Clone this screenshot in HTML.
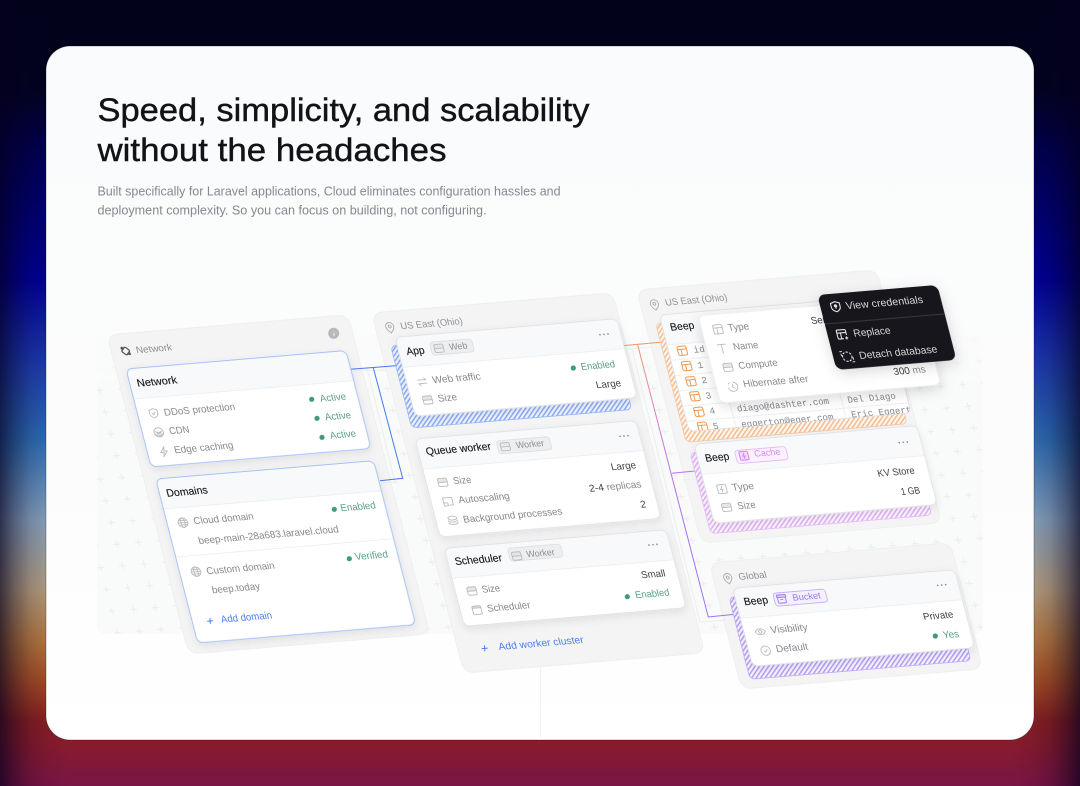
<!DOCTYPE html>
<html><head><meta charset="utf-8"><title>Speed, simplicity, and scalability</title>
<style>
html,body{margin:0;padding:0;width:1080px;height:786px;overflow:hidden}
body{background:
linear-gradient(to right,rgba(5,0,30,.7) 0,rgba(5,0,30,.42) 14px,rgba(5,0,30,.18) 30px,rgba(5,0,30,.05) 48px,rgba(5,0,30,0) 70px,rgba(5,0,30,0) 1010px,rgba(5,0,30,.05) 1032px,rgba(5,0,30,.18) 1050px,rgba(5,0,30,.42) 1066px,rgba(5,0,30,.7) 1080px),
linear-gradient(to bottom,#02021a 0,#020220 90px,#000050 150px,#00009a 280px,#1a33b0 350px,#2f70b8 440px,#8aa5c0 520px,#b8a080 590px,#b87a40 640px,#a84f25 680px,#8a2020 720px,#851a30 750px,#7a1545 786px)}
svg{position:absolute;left:0;top:0;display:block}
text{font-family:"Liberation Sans",sans-serif;font-size:10px}
.l{fill:#85888d;font-size:9.8px}.v{fill:#3e4146;font-size:9.8px}.g{fill:#5a9f85;font-size:9.8px}
.h{fill:#14161a;font-size:10.5px;stroke:#14161a;stroke-width:.12}.p{fill:#8d9095;font-size:9.5px}.b{fill:#4a80f0;font-size:10px}
.m{fill:#84878c;font-family:"Liberation Mono",monospace;font-size:9.2px}.w{fill:#d6d6d6;font-size:10.2px}
.k{fill:#8a8d92;font-size:9px}
.i{fill:none;stroke:#b9bbbf;stroke-width:.9;stroke-linecap:round;stroke-linejoin:round}
</style></head><body>
<svg width="1080" height="786" viewBox="0 0 1080 786" xmlns="http://www.w3.org/2000/svg">
<defs>
<linearGradient id="pg" x1="0" y1="0" x2="0" y2="1"><stop offset="0" stop-color="#fafbfc"/><stop offset=".6" stop-color="#fcfcfd"/><stop offset="1" stop-color="#ffffff"/></linearGradient>
<linearGradient id="fd" x1="0" y1="0" x2="0" y2="1"><stop offset="0" stop-color="#000"/><stop offset=".14" stop-color="#000"/><stop offset=".3" stop-color="#fff"/></linearGradient>
<mask id="gm" maskUnits="userSpaceOnUse" x="97" y="280" width="886" height="355"><rect x="97" y="280" width="886" height="355" fill="url(#fd)"/></mask>
<pattern id="plus" width="21.7" height="21.7" patternUnits="userSpaceOnUse" patternTransform="matrix(1 -.084 .256 1 7.6 -11.8)"><path d="M11 7.4v7M7.5 10.85h7" stroke="#eaecee" stroke-width=".9" fill="none"/></pattern>
<pattern id="hb" width="3.4" height="3.4" patternUnits="userSpaceOnUse" patternTransform="rotate(-45)"><rect width="3.4" height="3.4" fill="#eff3fe"/><rect width="3.4" height="1.4" fill="#8aabf3"/></pattern>
<pattern id="ho" width="3.4" height="3.4" patternUnits="userSpaceOnUse" patternTransform="rotate(-45)"><rect width="3.4" height="3.4" fill="#fef6ef"/><rect width="3.4" height="1.4" fill="#f3bd8f"/></pattern>
<pattern id="hp" width="3.4" height="3.4" patternUnits="userSpaceOnUse" patternTransform="rotate(-45)"><rect width="3.4" height="3.4" fill="#fcf5fe"/><rect width="3.4" height="1.4" fill="#e0b0f4"/></pattern>
<pattern id="hv" width="3.4" height="3.4" patternUnits="userSpaceOnUse" patternTransform="rotate(-45)"><rect width="3.4" height="3.4" fill="#f6f3fe"/><rect width="3.4" height="1.4" fill="#b49ef5"/></pattern>
<linearGradient id="og" gradientUnits="userSpaceOnUse" x1="637" y1="345" x2="708" y2="617"><stop offset="0" stop-color="#f0975a"/><stop offset=".28" stop-color="#d77cc8"/><stop offset=".5" stop-color="#b26df0"/><stop offset="1" stop-color="#9a70f5"/></linearGradient>
<filter id="s" x="-15%" y="-25%" width="130%" height="160%"><feDropShadow dx="0" dy="3" stdDeviation="4" flood-color="#000" flood-opacity=".08"/></filter>
<filter id="s2" x="-25%" y="-30%" width="150%" height="170%"><feDropShadow dx="0" dy="4" stdDeviation="7" flood-color="#000" flood-opacity=".15"/></filter>
<filter id="bl" x="0" y="0" width="1080" height="786" filterUnits="userSpaceOnUse"><feGaussianBlur stdDeviation=".35"/></filter>
<clipPath id="cb"><rect transform="matrix(1 -.084 .256 1 659.3 315)" width="222" height="116.5" rx="6"/></clipPath>

<g id="sz" transform="matrix(1 -.084 .256 1 0 0)" class="i"><rect x="-4" y="-3.5" width="8" height="3.5" fill="#e6e7e9" stroke="none"/><rect x="-4.5" y="-4" width="9" height="8" rx="1.5"/><path d="M-4.5 0H4.5" /></g>
<g id="tb" transform="matrix(1 -.084 .256 1 0 0)" class="i"><rect x="-4.5" y="-4.5" width="9" height="9" rx="1.5"/><path d="M-4.5-1.5H4.5M-1-1.5V4.5"/></g>
<g id="ot" transform="matrix(1 -.084 .256 1 0 0)" fill="none" stroke="#f5984f" stroke-width="1" stroke-linejoin="round"><rect x="-4.5" y="-4.5" width="9" height="9" rx="1.6"/><path d="M-4.5-1.5H4.5M-1-1.5V4.5"/></g>
<g id="ar" transform="matrix(1 -.084 .256 1 0 0)" class="i"><path d="M-4-1.8H4L2.2-3.6M4 1.8H-4L-2.2 3.6"/></g>
<g id="sh" transform="matrix(1 -.084 .256 1 0 0)" class="i"><path d="M0-4.6L4-3.2V0C4 2.4 2 3.9 0 4.6C-2 3.9-4 2.4-4 0V-3.2Z"/><path d="M-1.5 0L-.3 1.2L1.6-.9"/></g>
<g id="cd" transform="matrix(1 -.084 .256 1 0 0)" class="i"><circle r="4.6"/><path d="M-2.8-1A2.9 2.9 0 0 0 2.8-1M-1.6-.6A1.7 1.7 0 0 0 1.6-.6"/><path d="M-4 1.5A4.4 4.4 0 0 0 4 1.5" fill="#dcdde0"/></g>
<g id="bo" transform="matrix(1 -.084 .256 1 0 0)" class="i"><path d="M1.2-5L-3.4 .6H0L-1.2 5L3.4-.6H0Z"/></g>
<g id="gl" transform="matrix(1 -.084 .256 1 0 0)" class="i"><circle r="4.7"/><ellipse rx="2" ry="4.7"/><path d="M-4.7 0H4.7M-4-2.2H4M-4 2.2H4"/></g>
<g id="pn" transform="matrix(1 -.084 .256 1 0 0)" class="i" style="stroke:#a8aaae"><path d="M0 5.2C-2.6 2.8-4 1-4-1.2A4 4 0 0 1 4-1.2C4 1 2.6 2.8 0 5.2Z"/><circle cy="-1.2" r="1.4"/></g>
<g id="au" transform="matrix(1 -.084 .256 1 0 0)" class="i"><path d="M-4.5 1V-4H4.5V3.5H1"/><rect x="-4.5" y="1" width="4" height="3" rx=".5"/></g>
<g id="st" transform="matrix(1 -.084 .256 1 0 0)" class="i"><ellipse cy="-2.6" rx="4.4" ry="1.9"/><path d="M-4.4-.4C-4.4 2 4.4 2 4.4-.4M-4.4 1.9C-4.4 4.3 4.4 4.3 4.4 1.9"/></g>
<g id="ca" transform="matrix(1 -.084 .256 1 0 0)" class="i"><rect x="-4" y="-3.8" width="8" height="1.8" fill="#dcdde0" stroke="none"/><rect x="-4.3" y="-4" width="8.6" height="8.4" rx="1.2"/><path d="M-4.3-2H4.3"/></g>
<g id="ey" transform="matrix(1 -.084 .256 1 0 0)" class="i"><path d="M-5 0C-2.5-4 2.5-4 5 0C2.5 4-2.5 4-5 0Z"/><circle r="1.6"/></g>
<g id="ck" transform="matrix(1 -.084 .256 1 0 0)" class="i"><circle r="4.6"/><path d="M-1.6.2L-.4 1.4L1.8-1.2"/></g>
<g id="tt" transform="matrix(1 -.084 .256 1 0 0)" class="i"><path d="M-4-4.2H4M0-4.2V4.4"/></g>
<g id="cl" transform="matrix(1 -.084 .256 1 0 0)" class="i"><path d="M1-4.6A4.7 4.7 0 1 1-4.6 1"/><path d="M0-2V.6L1.8 1.6"/><path d="M-4-3L-2.6-4.2"/></g>
<g id="ty" transform="matrix(1 -.084 .256 1 0 0)" class="i"><rect x="-4.4" y="-4.4" width="8.8" height="8.8" rx="1.2"/><path d="M.6-3L-1.4.4H1L-.6 3"/></g>
<g id="dt" transform="matrix(1 -.084 .256 1 0 0)" fill="#8d9095"><circle cx="-4" r=".85"/><circle r=".85"/><circle cx="4" r=".85"/></g>
</defs>

<!-- page card -->
<rect x="46" y="46" width="988" height="694" rx="24" fill="url(#pg)" stroke="#000" stroke-opacity=".28" stroke-width="1"/>
<text x="97.5" y="121" fill="#111316" stroke="#111316" stroke-width=".4" textLength="492" lengthAdjust="spacingAndGlyphs" style="font-size:32px">Speed, simplicity, and scalability</text>
<text x="97.5" y="161" fill="#111316" stroke="#111316" stroke-width=".4" textLength="349" lengthAdjust="spacingAndGlyphs" style="font-size:32px">without the headaches</text>
<text x="97.5" y="195.3" fill="#85888e" textLength="463" lengthAdjust="spacingAndGlyphs" style="font-size:13px">Built specifically for Laravel applications, Cloud eliminates configuration hassles and</text>
<text x="97.5" y="214.3" fill="#85888e" textLength="389" lengthAdjust="spacingAndGlyphs" style="font-size:13px">deployment complexity. So you can focus on building, not configuring.</text>

<g filter="url(#bl)">
<!-- grid -->
<g mask="url(#gm)"><rect x="97" y="280" width="886" height="354" rx="8" fill="#f9fafa"/><rect x="97" y="280" width="886" height="354" rx="8" fill="url(#plus)"/></g>
<path d="M540.5 660V738" stroke="#f1f1f2" fill="none"/>

<!-- panels -->
<g fill="#f4f4f5" stroke="#efeff0">
<rect transform="matrix(1 -.084 .256 1 107 335)" width="241" height="319" rx="10"/>
<rect transform="matrix(1 -.084 .256 1 371.7 313)" width="241" height="360" rx="10"/>
<rect transform="matrix(1 -.084 .256 1 636.7 290)" width="240" height="253" rx="10"/>
<rect transform="matrix(1 -.084 .256 1 709.3 563)" width="241" height="126" rx="10"/>
</g>

<!-- rails -->
<g fill="none" stroke="#ecedee">
<path d="M353 371L387 370M367 368L395 482M382 483L398 482"/>
<path d="M626 349L652 347M632 349L700 622L726 620M683 480L695 479"/>
</g>

<!-- connectors -->
<g fill="none" stroke-width="1">
<path d="M350.7 369.3L395.7 365.7M373.3 367.7L402.7 478.3L380 480.7" stroke="#4a78f0"/>
<path d="M622.3 345.7L660 342.3" stroke="#f0975a"/>
<path d="M637.7 345L708.3 617L733 614.5" stroke="url(#og)"/>
<path d="M672 473.3L695 471" stroke="#b873ec"/>
</g>

<!-- hatches -->
<rect transform="matrix(1 -.084 .256 1 390.7 346)" width="220" height="82" rx="5" fill="url(#hb)" stroke="#9ab8f6" stroke-width=".8"/>
<rect transform="matrix(1 -.084 .256 1 655.7 323.3)" width="221" height="119" rx="5" fill="url(#ho)" stroke="#f6c7a0" stroke-width=".8"/>
<rect transform="matrix(1 -.084 .256 1 690 452.7)" width="221" height="81" rx="5" fill="url(#hp)" stroke="#e6bdf7" stroke-width=".8"/>
<rect transform="matrix(1 -.084 .256 1 729 597.3)" width="221" height="82" rx="5" fill="url(#hv)" stroke="#bfabf7" stroke-width=".8"/>

<!-- Network card -->
<g transform="matrix(1 -.084 .256 1 126 369)" filter="url(#s)"><rect width="220" height="98" rx="6" fill="#fff"/><path d="M0 30V6a6 6 0 0 1 6-6H214a6 6 0 0 1 6 6V30Z" fill="#f8f9fa"/><path d="M0 30H220" stroke="#eeeff1"/><rect width="220" height="98" rx="6" fill="none" stroke="#a5c1f6"/></g>
<!-- Domains -->
<g transform="matrix(1 -.084 .256 1 155.7 479)" filter="url(#s)"><rect width="218" height="164" rx="6" fill="#fff"/><path d="M0 30V6a6 6 0 0 1 6-6H212a6 6 0 0 1 6 6V30Z" fill="#f8f9fa"/><path d="M0 30H218M0 78H218" stroke="#eeeff1"/><rect width="218" height="164" rx="6" fill="none" stroke="#a5c1f6"/></g>
<!-- App -->
<g transform="matrix(1 -.084 .256 1 395 337.3)" filter="url(#s)"><rect width="222" height="79" rx="6" fill="#fff"/><path d="M0 30V6a6 6 0 0 1 6-6H216a6 6 0 0 1 6 6V30Z" fill="#f8f9fa"/><path d="M0 30H222" stroke="#eeeff1"/><rect width="222" height="79" rx="6" fill="none" stroke="#e2e3e5"/></g>
<!-- Queue -->
<g transform="matrix(1 -.084 .256 1 415 439)" filter="url(#s)"><rect width="221" height="98" rx="6" fill="#fff"/><path d="M0 30V6a6 6 0 0 1 6-6H215a6 6 0 0 1 6 6V30Z" fill="#f8f9fa"/><path d="M0 30H221" stroke="#eeeff1"/><rect width="221" height="98" rx="6" fill="none" stroke="#e2e3e5"/></g>
<!-- Scheduler -->
<g transform="matrix(1 -.084 .256 1 444.3 548.3)" filter="url(#s)"><rect width="222" height="78" rx="6" fill="#fff"/><path d="M0 30V6a6 6 0 0 1 6-6H216a6 6 0 0 1 6 6V30Z" fill="#f8f9fa"/><path d="M0 30H222" stroke="#eeeff1"/><rect width="222" height="78" rx="6" fill="none" stroke="#e2e3e5"/></g>
<!-- DB card -->
<g transform="matrix(1 -.084 .256 1 659.3 315)"><rect width="222" height="116.5" rx="6" fill="#fff"/><path d="M0 30V6a6 6 0 0 1 6-6H216a6 6 0 0 1 6 6V30Z" fill="#f8f9fa"/><path d="M0 30H222M0 45.3H222M0 60.6H222M0 75.9H222M0 91.2H222M0 106.5H222M47 30V116M157 30V116" stroke="#eeeff1"/><rect width="222" height="116.5" rx="6" fill="none" stroke="#e2e3e5"/></g>
<use href="#ot" x="682.3" y="350.7"/><use href="#ot" x="686.7" y="366"/><use href="#ot" x="691" y="381.3"/><use href="#ot" x="695" y="396.3"/><use href="#ot" x="699" y="411.7"/>
<g clip-path="url(#cb)">
<use href="#ot" x="702.7" y="426.7"/>
<text class="m" transform="matrix(1 -.084 .256 1 694.3 352.7)">id</text>
<text class="m" transform="matrix(1 -.084 .256 1 698.3 368.3)">1</text>
<text class="m" transform="matrix(1 -.084 .256 1 702.3 383.3)">2</text>
<text class="m" transform="matrix(1 -.084 .256 1 706.3 398.7)">3</text>
<text class="m" transform="matrix(1 -.084 .256 1 710.3 414)">4</text>
<text class="m" transform="matrix(1 -.084 .256 1 713.7 429.3)">5</text>
<text class="m" transform="matrix(1 -.084 .256 1 737.7 411.5)" textLength="92" lengthAdjust="spacingAndGlyphs">diago@dashter.com</text>
<text class="m" transform="matrix(1 -.084 .256 1 848.3 402.7)" textLength="48" lengthAdjust="spacingAndGlyphs">Del Diago</text>
<text class="m" transform="matrix(1 -.084 .256 1 742 427.3)" textLength="92" lengthAdjust="spacingAndGlyphs">eggerton@eger.com</text>
<text class="m" transform="matrix(1 -.084 .256 1 852 417.5)" textLength="60" lengthAdjust="spacingAndGlyphs">Eric Eggert</text>
</g>
<text class="h" transform="matrix(1 -.084 .256 1 671 330.7)" textLength="24" lengthAdjust="spacingAndGlyphs">Beep</text>
<!-- Cache -->
<g transform="matrix(1 -.084 .256 1 694 444.3)" filter="url(#s)"><rect width="223" height="79" rx="6" fill="#fff"/><path d="M0 30V6a6 6 0 0 1 6-6H217a6 6 0 0 1 6 6V30Z" fill="#f8f9fa"/><path d="M0 30H223" stroke="#eeeff1"/><rect width="223" height="79" rx="6" fill="none" stroke="#e2e3e5"/></g>
<!-- Bucket -->
<g transform="matrix(1 -.084 .256 1 732.7 588.3)" filter="url(#s)"><rect width="222" height="78" rx="6" fill="#fff"/><path d="M0 30V6a6 6 0 0 1 6-6H216a6 6 0 0 1 6 6V30Z" fill="#f8f9fa"/><path d="M0 30H222" stroke="#eeeff1"/><rect width="222" height="78" rx="6" fill="none" stroke="#e2e3e5"/></g>
<!-- badges -->
<g fill="#edeef0" stroke="#dcdee1" stroke-width=".8">
<rect transform="matrix(1 -.084 .256 1 429.3 342.3)" width="42" height="13" rx="3"/>
<rect transform="matrix(1 -.084 .256 1 496 441)" width="53" height="13" rx="3"/>
<rect transform="matrix(1 -.084 .256 1 507.3 548.3)" width="53" height="13" rx="3"/>
</g>
<rect transform="matrix(1 -.084 .256 1 734.3 450.7)" width="51" height="13" rx="3" fill="#fcf2ff" stroke="#e8b4f8" stroke-width=".8"/>
<rect transform="matrix(1 -.084 .256 1 772.7 593.3)" width="52" height="13" rx="3" fill="#f4f0ff" stroke="#bda8f8" stroke-width=".8"/>

<!-- panel labels -->
<g transform="matrix(1 -.084 .256 1 125.7 351)" fill="none" stroke="#55585d" stroke-width="1.3"><rect x="-3" y="-3" width="6" height="6" rx="1.2" transform="rotate(45)"/><circle cx="-3" cy="-3" r=".8" fill="#55585d"/><circle cx="3" cy="3" r=".8" fill="#55585d"/></g>
<text class="p" transform="matrix(1 -.084 .256 1 136.7 353.3)" textLength="36" lengthAdjust="spacingAndGlyphs">Network</text>
<circle cx="333.7" cy="333.3" r="5.5" fill="#b7b9bc"/><path d="M333.9 331.5v.6M334 333.2v2.6" stroke="#fff" stroke-width=".9" fill="none"/>
<use href="#pn" x="390" y="327.7"/><text class="p" transform="matrix(1 -.084 .256 1 401.3 329.3)" textLength="62" lengthAdjust="spacingAndGlyphs">US East (Ohio)</text>
<use href="#pn" x="654.7" y="305"/><text class="p" transform="matrix(1 -.084 .256 1 666 305.7)" textLength="62" lengthAdjust="spacingAndGlyphs">US East (Ohio)</text>
<use href="#pn" x="728" y="578.7"/><text class="p" transform="matrix(1 -.084 .256 1 739.3 580)" textLength="28" lengthAdjust="spacingAndGlyphs">Global</text>

<!-- Network card content -->
<text class="h" transform="matrix(1 -.084 .256 1 137.7 386.7)" textLength="40" lengthAdjust="spacingAndGlyphs">Network</text>
<use href="#sh" x="153.7" y="413.3"/><text class="l" transform="matrix(1 -.084 .256 1 164.7 415.7)" textLength="71" lengthAdjust="spacingAndGlyphs">DDoS protection</text>
<use href="#cd" x="158.7" y="432.3"/><text class="l" transform="matrix(1 -.084 .256 1 170 434.3)" textLength="20" lengthAdjust="spacingAndGlyphs">CDN</text>
<use href="#bo" x="164" y="451.7"/><text class="l" transform="matrix(1 -.084 .256 1 175 453.3)" textLength="59" lengthAdjust="spacingAndGlyphs">Edge caching</text>
<g fill="#3f9c76"><circle cx="311.7" cy="399.3" r="2.6"/><circle cx="317" cy="418.3" r="2.6"/><circle cx="322" cy="437.3" r="2.6"/><circle cx="334.3" cy="509.3" r="2.6"/><circle cx="349.3" cy="558.7" r="2.6"/><circle cx="573.3" cy="368" r="2.6"/><circle cx="627.3" cy="596.7" r="2.6"/><circle cx="935.3" cy="636" r="2.6"/></g>
<text class="g" transform="matrix(1 -.084 .256 1 320.7 401.7)" textLength="26" lengthAdjust="spacingAndGlyphs">Active</text>
<text class="g" transform="matrix(1 -.084 .256 1 325.7 420.3)" textLength="26" lengthAdjust="spacingAndGlyphs">Active</text>
<text class="g" transform="matrix(1 -.084 .256 1 330.7 438.7)" textLength="26" lengthAdjust="spacingAndGlyphs">Active</text>

<!-- Domains content -->
<text class="h" transform="matrix(1 -.084 .256 1 167.3 496.7)" textLength="41" lengthAdjust="spacingAndGlyphs">Domains</text>
<use href="#gl" x="183" y="522.7"/><text class="l" transform="matrix(1 -.084 .256 1 194.3 524.3)" textLength="60" lengthAdjust="spacingAndGlyphs">Cloud domain</text>
<text class="g" transform="matrix(1 -.084 .256 1 341.3 511.3)" textLength="35" lengthAdjust="spacingAndGlyphs">Enabled</text>
<text class="l" transform="matrix(1 -.084 .256 1 199.3 544)" textLength="140" lengthAdjust="spacingAndGlyphs">beep-main-28a683.laravel.cloud</text>
<use href="#gl" x="196" y="571.7"/><text class="l" transform="matrix(1 -.084 .256 1 207.3 574.3)" textLength="68" lengthAdjust="spacingAndGlyphs">Custom domain</text>
<text class="g" transform="matrix(1 -.084 .256 1 355.7 560)" textLength="33" lengthAdjust="spacingAndGlyphs">Verified</text>
<text class="l" transform="matrix(1 -.084 .256 1 212.7 593.3)" textLength="48" lengthAdjust="spacingAndGlyphs">beep.today</text>
<path d="M207.2 621.2L213 620.7M210 618L210.3 623.8" stroke="#4a80f0" fill="none"/>
<text class="b" transform="matrix(1 -.084 .256 1 221.7 622.7)" textLength="51" lengthAdjust="spacingAndGlyphs">Add domain</text>

<!-- App content -->
<text class="h" transform="matrix(1 -.084 .256 1 407.3 355)" textLength="18" lengthAdjust="spacingAndGlyphs">App</text>
<use href="#sz" x="439" y="348.3"/><text class="k" transform="matrix(1 -.084 .256 1 450 350)" textLength="18" lengthAdjust="spacingAndGlyphs">Web</text>
<use href="#dt" x="604" y="334.3"/>
<use href="#ar" x="422.3" y="381.7"/><text class="l" transform="matrix(1 -.084 .256 1 433.3 383.3)" textLength="48" lengthAdjust="spacingAndGlyphs">Web traffic</text>
<use href="#sz" x="427.7" y="400"/><text class="l" transform="matrix(1 -.084 .256 1 438.7 401.7)" textLength="19" lengthAdjust="spacingAndGlyphs">Size</text>
<text class="g" transform="matrix(1 -.084 .256 1 581.7 370)" textLength="34" lengthAdjust="spacingAndGlyphs">Enabled</text>
<text class="v" transform="matrix(1 -.084 .256 1 596.7 388.3)" textLength="25" lengthAdjust="spacingAndGlyphs">Large</text>

<!-- Queue content -->
<text class="h" transform="matrix(1 -.084 .256 1 426.7 455)" textLength="65" lengthAdjust="spacingAndGlyphs">Queue worker</text>
<use href="#sz" x="505.3" y="446.7"/><text class="k" transform="matrix(1 -.084 .256 1 516.7 448.3)" textLength="28" lengthAdjust="spacingAndGlyphs">Worker</text>
<use href="#dt" x="624" y="436"/>
<text class="v" transform="matrix(1 -.084 .256 1 611.7 470.3)" textLength="25" lengthAdjust="spacingAndGlyphs">Large</text>
<use href="#sz" x="442.7" y="482.3"/><text class="l" transform="matrix(1 -.084 .256 1 454 484.3)" textLength="18" lengthAdjust="spacingAndGlyphs">Size</text>
<text class="l" transform="matrix(1 -.084 .256 1 590 491.7)" textLength="52" lengthAdjust="spacingAndGlyphs"><tspan fill="#3e4146">2-4</tspan> replicas</text>
<use href="#au" x="448" y="501.7"/><text class="l" transform="matrix(1 -.084 .256 1 459.3 503.3)" textLength="51" lengthAdjust="spacingAndGlyphs">Autoscaling</text>
<text class="v" transform="matrix(1 -.084 .256 1 641.3 507.7)">2</text>
<use href="#st" x="453" y="520.7"/><text class="l" transform="matrix(1 -.084 .256 1 464 522.7)" textLength="99" lengthAdjust="spacingAndGlyphs">Background processes</text>

<!-- Scheduler content -->
<text class="h" transform="matrix(1 -.084 .256 1 455.7 565)" textLength="47" lengthAdjust="spacingAndGlyphs">Scheduler</text>
<use href="#sz" x="516.7" y="556"/><text class="k" transform="matrix(1 -.084 .256 1 527.3 557.3)" textLength="28" lengthAdjust="spacingAndGlyphs">Worker</text>
<use href="#dt" x="653" y="544.7"/>
<text class="v" transform="matrix(1 -.084 .256 1 642 578.3)" textLength="24" lengthAdjust="spacingAndGlyphs">Small</text>
<use href="#sz" x="472" y="591"/><text class="l" transform="matrix(1 -.084 .256 1 482.7 592.7)" textLength="18" lengthAdjust="spacingAndGlyphs">Size</text>
<text class="g" transform="matrix(1 -.084 .256 1 636 598.3)" textLength="34" lengthAdjust="spacingAndGlyphs">Enabled</text>
<use href="#ca" x="477" y="610"/><text class="l" transform="matrix(1 -.084 .256 1 488 611.7)" textLength="43" lengthAdjust="spacingAndGlyphs">Scheduler</text>
<path d="M481.7 648.6L487.7 648.1M484.5 645.4L484.9 651.3" stroke="#4a80f0" fill="none"/>
<text class="b" transform="matrix(1 -.084 .256 1 499.3 650)" textLength="85" lengthAdjust="spacingAndGlyphs">Add worker cluster</text>

<!-- Overlay card -->
<g transform="matrix(1 -.084 .256 1 698.3 316)" filter="url(#s2)"><rect width="220" height="87" rx="6" fill="#fff" stroke="#ebebed" stroke-width=".6"/></g>
<use href="#tb" x="718" y="329.3"/><text class="l" transform="matrix(1 -.084 .256 1 728.7 331)" textLength="21" lengthAdjust="spacingAndGlyphs">Type</text>
<use href="#tt" x="722.3" y="348.7"/><text class="l" transform="matrix(1 -.084 .256 1 734 350)" textLength="25" lengthAdjust="spacingAndGlyphs">Name</text>
<use href="#sz" x="728" y="367.3"/><text class="l" transform="matrix(1 -.084 .256 1 739.3 369)" textLength="39" lengthAdjust="spacingAndGlyphs">Compute</text>
<use href="#cl" x="733" y="386.7"/><text class="l" transform="matrix(1 -.084 .256 1 744 387.3)" textLength="65" lengthAdjust="spacingAndGlyphs">Hibernate after</text>
<text class="v" transform="matrix(1 -.084 .256 1 811.7 324)" textLength="45" lengthAdjust="spacingAndGlyphs">Serverless</text>
<text class="l" transform="matrix(1 -.084 .256 1 894.3 375)" textLength="32" lengthAdjust="spacingAndGlyphs"><tspan fill="#3e4146">300</tspan> ms</text>

<!-- Cache content -->
<text class="h" transform="matrix(1 -.084 .256 1 706 461.7)" textLength="24" lengthAdjust="spacingAndGlyphs">Beep</text>
<g transform="matrix(1 -.084 .256 1 744 455.7)" fill="none" stroke="#d07ff0" stroke-width=".9"><rect x="-4.3" y="-4.3" width="8.6" height="8.6" rx="1.2" fill="#f3d8fc"/><path d="M.6-2.8L-1.3.4H1L-.6 2.8"/></g>
<text class="k" style="fill:#d484f0" transform="matrix(1 -.084 .256 1 755 456.7)" textLength="26" lengthAdjust="spacingAndGlyphs">Cache</text>
<use href="#dt" x="903.3" y="442.3"/>
<text class="v" transform="matrix(1 -.084 .256 1 878.3 476.7)" textLength="37" lengthAdjust="spacingAndGlyphs">KV Store</text>
<text class="v" transform="matrix(1 -.084 .256 1 901.7 495)" textLength="19" lengthAdjust="spacingAndGlyphs">1 GB</text>
<use href="#ty" x="722" y="489"/><text class="l" transform="matrix(1 -.084 .256 1 732.7 490.7)" textLength="22" lengthAdjust="spacingAndGlyphs">Type</text>
<use href="#sz" x="726.7" y="507.3"/><text class="l" transform="matrix(1 -.084 .256 1 738.3 509.3)" textLength="18" lengthAdjust="spacingAndGlyphs">Size</text>

<!-- Bucket content -->
<text class="h" transform="matrix(1 -.084 .256 1 744.7 605.3)" textLength="24" lengthAdjust="spacingAndGlyphs">Beep</text>
<g transform="matrix(1 -.084 .256 1 781.7 599)" fill="none" stroke="#9a78f0" stroke-width=".9"><rect x="-4.5" y="-4.2" width="9" height="2.6" rx=".6" fill="#d9ccfb"/><path d="M-3.9-1.6V3A1 1 0 0 0-2.9 4H2.9A1 1 0 0 0 3.9 3V-1.6M-1.4.6H1.4"/></g>
<text class="k" style="fill:#9a78f0" transform="matrix(1 -.084 .256 1 793.3 600.7)" textLength="28" lengthAdjust="spacingAndGlyphs">Bucket</text>
<use href="#dt" x="941.7" y="585"/>
<text class="v" transform="matrix(1 -.084 .256 1 924 620)" textLength="30" lengthAdjust="spacingAndGlyphs">Private</text>
<text class="g" transform="matrix(1 -.084 .256 1 943.7 638.3)" textLength="16" lengthAdjust="spacingAndGlyphs">Yes</text>
<use href="#ey" x="760.3" y="631.7"/><text class="l" transform="matrix(1 -.084 .256 1 771.3 633.3)" textLength="37" lengthAdjust="spacingAndGlyphs">Visibility</text>
<use href="#ck" x="765.7" y="650.7"/><text class="l" transform="matrix(1 -.084 .256 1 776.7 652.3)" textLength="32" lengthAdjust="spacingAndGlyphs">Default</text>

<!-- Menu -->
<g transform="matrix(1 -.084 .256 1 817.3 295)" filter="url(#s2)"><rect width="120" height="75" rx="7" fill="#18181a"/><path d="M0 29H120" stroke="#34353a"/></g>
<g transform="matrix(1 -.084 .256 1 835.7 306.7)" fill="none" stroke="#e4e4e4" stroke-width="1.1"><path d="M0-5L4.4-3.5V.2C4.4 2.6 2.2 4.2 0 5C-2.2 4.2-4.4 2.6-4.4.2V-3.5Z"/><circle cy="-.8" r="1.1" fill="#e4e4e4"/><path d="M0-.5V2"/></g>
<text class="w" transform="matrix(1 -.084 .256 1 846.7 309.3)" textLength="77" lengthAdjust="spacingAndGlyphs">View credentials</text>
<g transform="matrix(1 -.084 .256 1 841.7 334.3)" fill="none" stroke="#e4e4e4" stroke-width="1.1"><path d="M4.5 1V-3.3A1.2 1.2 0 0 0 3.3-4.5H-3.3A1.2 1.2 0 0 0-4.5-3.3V3.3A1.2 1.2 0 0 0-3.3 4.5H1M-4.5-1.5H4.5M-1-1.5V4.5M4 2.5V5.5M2.5 4H5.5"/></g>
<text class="w" transform="matrix(1 -.084 .256 1 854.3 336.7)" textLength="37" lengthAdjust="spacingAndGlyphs">Replace</text>
<g transform="matrix(1 -.084 .256 1 847.3 356.7)" fill="none" stroke="#e4e4e4" stroke-width="1.1"><circle r="4.6" stroke-dasharray="2.2 1.3"/><path d="M-5.5-3.5V-1M-4-5.5H-6.5M5.5 3.5V1M4 5.5H6.5" stroke-width=".9"/></g>
<text class="w" transform="matrix(1 -.084 .256 1 860 359)" textLength="78" lengthAdjust="spacingAndGlyphs">Detach database</text>
</g>
</svg>
</body></html>
